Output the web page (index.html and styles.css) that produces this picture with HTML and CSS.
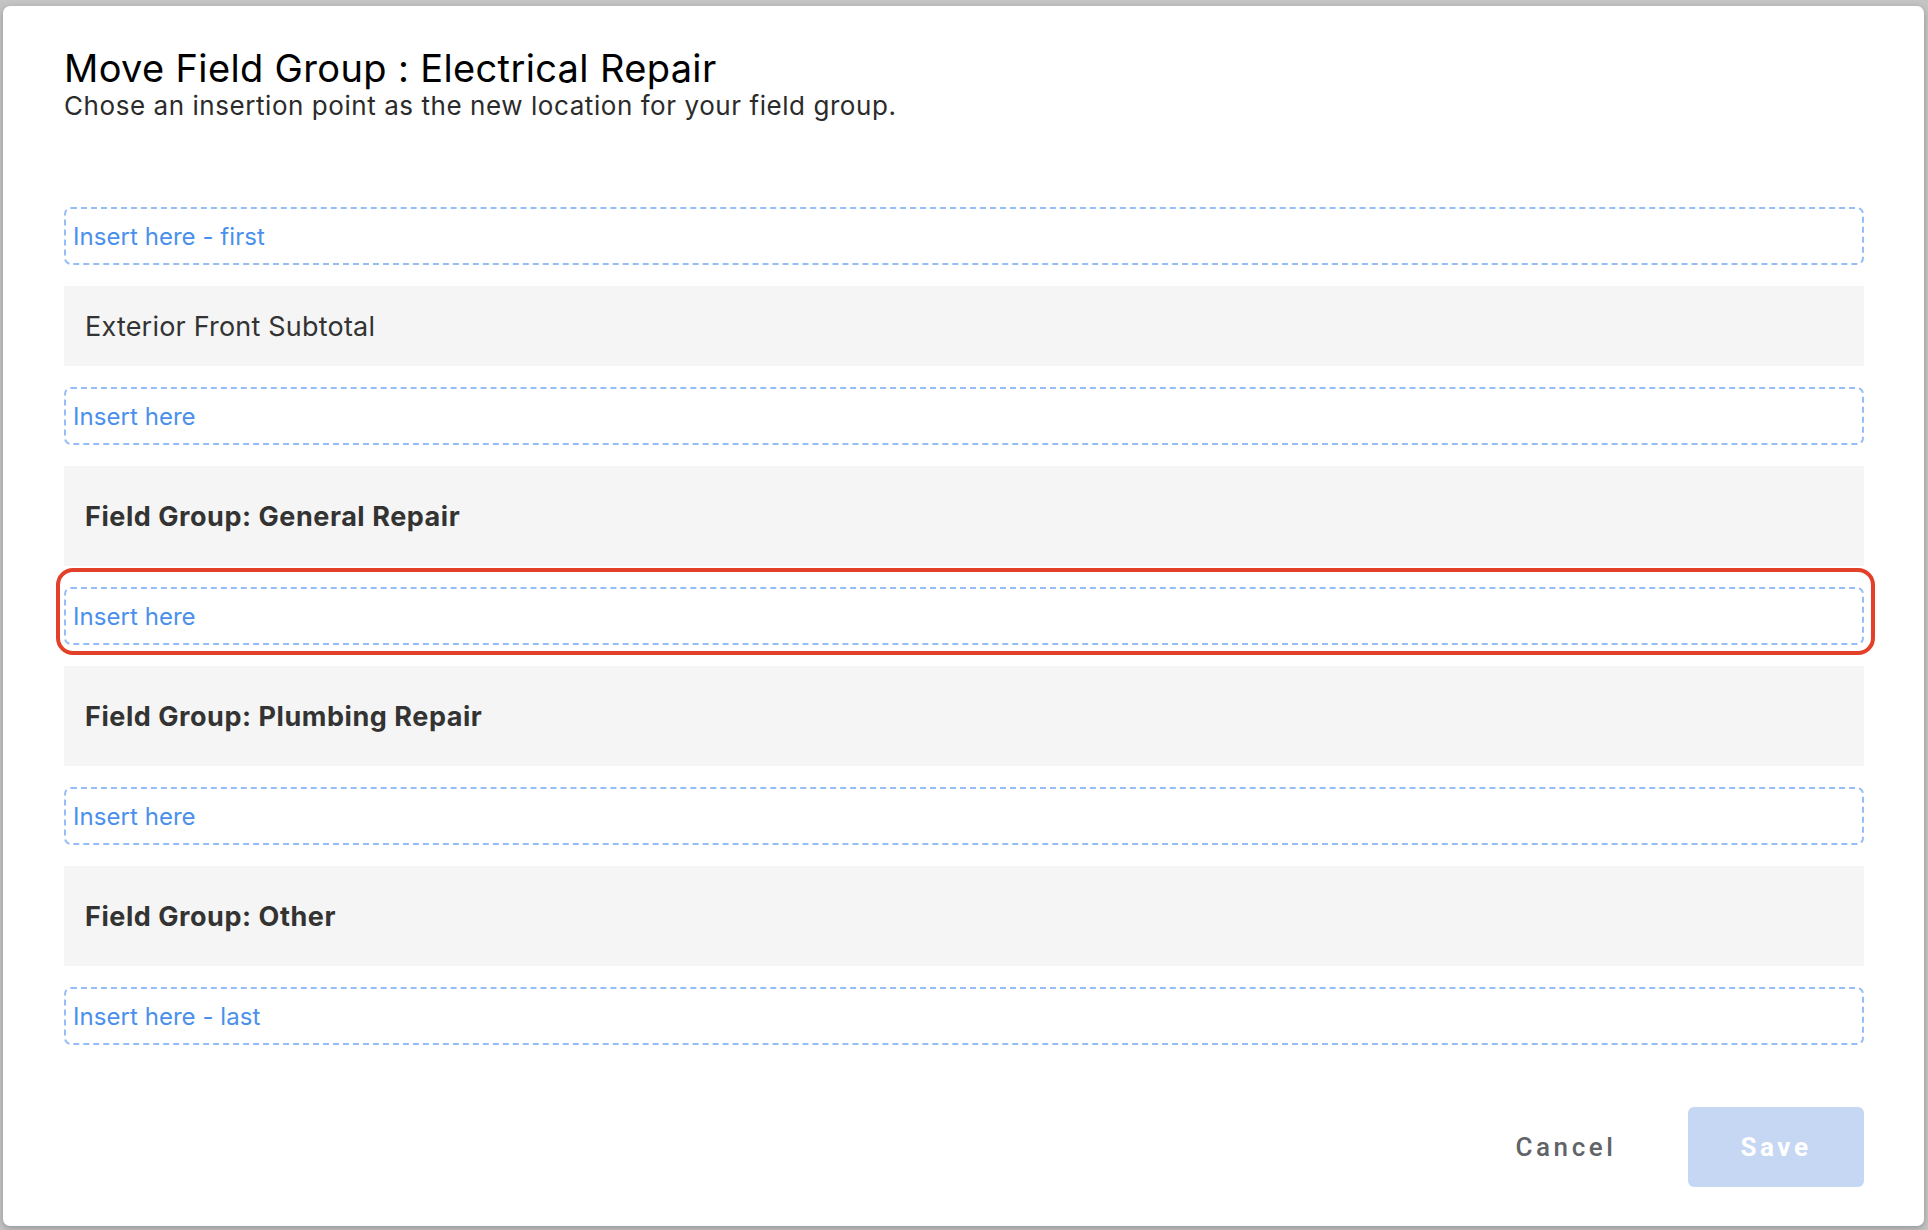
FILE: index.html
```html
<!DOCTYPE html>
<html lang="en">
<head>
<meta charset="utf-8">
<title>Move Field Group</title>
<link rel="stylesheet" href="styles.css">
</head>
<body>
<div class="modal">
  <header class="modal-header">
    <h1 class="modal-title">Move Field Group : Electrical Repair</h1>
    <p class="modal-subtitle">Chose an insertion point as the new location for your field group.</p>
  </header>
  <div class="slot-list">
    <div class="insert-slot">Insert here - first</div>
    <div class="group-row short">Exterior Front Subtotal</div>
    <div class="insert-slot">Insert here</div>
    <div class="group-row bold">Field Group: General Repair</div>
    <div class="insert-slot highlighted">Insert here<span class="highlight-ring"></span></div>
    <div class="group-row bold">Field Group: Plumbing Repair</div>
    <div class="insert-slot">Insert here</div>
    <div class="group-row bold">Field Group: Other</div>
    <div class="insert-slot">Insert here - last</div>
  </div>
  <footer class="modal-footer">
    <button class="btn btn-cancel">Cancel</button>
    <button class="btn btn-save" disabled>Save</button>
  </footer>
</div>
</body>
</html>
```
FILE: styles.css
```css
html, body {
  margin: 0;
  padding: 0;
}
body {
  background: #c4c4c4;
  width: 1928px;
  height: 1230px;
  overflow: hidden;
  font-family: Inter, "Liberation Sans", sans-serif;
}
.modal {
  box-sizing: border-box;
  margin: 6px 0 0 3px;
  width: 1921px;
  height: 1220px;
  background: #ffffff;
  border-radius: 7px;
  box-shadow: 0 2px 6px rgba(0,0,0,0.25);
  padding: 41px 60px 39px 61px;
  display: flex;
  flex-direction: column;
}
.modal-header {
  margin: 0;
}
.modal-title {
  margin: 0;
  font-family: Inter, "Liberation Sans", sans-serif;
  font-weight: 400;
  font-size: 38px;
  line-height: 42px;
  color: #000;
  letter-spacing: 0.35px;
}
.modal-subtitle {
  margin: 1px 0 0;
  font-family: Inter, "Liberation Sans", sans-serif;
  font-size: 26px;
  line-height: 32px;
  color: #2b2b2b;
  letter-spacing: 0.56px;
}
.slot-list {
  margin-top: 85px;
  display: flex;
  flex-direction: column;
  gap: 21px;
}
.insert-slot {
  position: relative;
  box-sizing: border-box;
  height: 58px;
  border: 2px dashed #95bdf6;
  border-radius: 7px;
  padding: 0 0 0 7px;
  display: flex;
  align-items: center;
  font-size: 24px;
  letter-spacing: 0.05px;
  color: #4a90ec;
}
.highlight-ring {
  position: absolute;
  top: -21px;
  left: -10px;
  right: -13px;
  bottom: -12px;
  border: 4px solid #e3402a;
  border-radius: 17px;
  pointer-events: none;
}
.group-row {
  box-sizing: border-box;
  height: 100px;
  background: #f5f5f5;
  padding: 0 0 0 21px;
  display: flex;
  align-items: center;
  font-size: 27px;
  letter-spacing: 0.2px;
  color: #333333;
}
.group-row.short {
  height: 80px;
}
.group-row.bold {
  font-weight: 700;
  letter-spacing: 0.55px;
}
.modal-footer {
  margin-top: auto;
  display: flex;
  justify-content: flex-end;
  gap: 34px;
}
.btn {
  box-sizing: border-box;
  height: 80px;
  width: 176px;
  border: none;
  border-radius: 6px;
  font-family: Roboto, "Noto Sans", sans-serif;
  font-size: 26px;
  font-weight: 500;
  letter-spacing: 3.6px;
  padding: 0;
  cursor: pointer;
}
.btn-cancel {
  background: transparent;
  color: #606469;
}
.btn-save {
  background: #c6d7f4;
  color: #ffffff;
  font-weight: 700;
}
```
